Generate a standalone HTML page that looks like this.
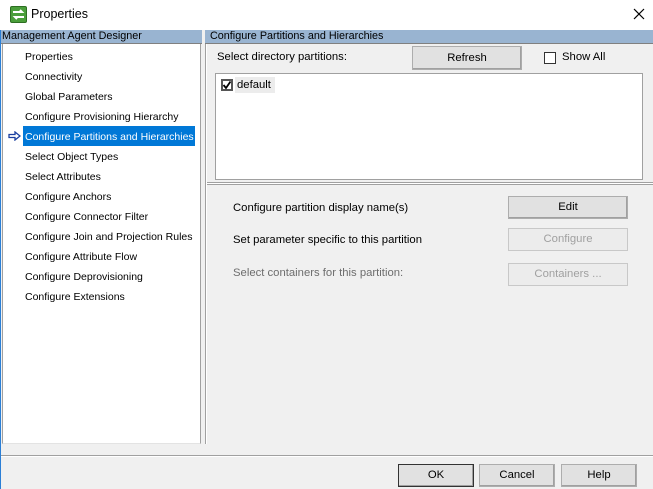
<!DOCTYPE html>
<html><head><style>
*{margin:0;padding:0;box-sizing:border-box}
body{width:653px;height:489px;background:#f0f0f0;font-family:"Liberation Sans",sans-serif;font-size:11.3px;color:#000;position:relative;overflow:hidden}
.a{position:absolute;white-space:nowrap}
.btn{position:absolute;background:#e1e1e1;border:1px solid #adadad;text-align:center;font-size:11.3px;box-shadow:inset -1px -1px 0 #a0a0a0}
.dis{color:#a0a0a0;background:#ececec;border-color:#c8c8c8;box-shadow:none}
.item{position:absolute;left:25px;height:18px;line-height:18px;font-size:10.5px;white-space:nowrap}
</style></head><body>
<div class="a" style="left:0;top:0;width:653px;height:30px;background:#fff"></div>
<div class="a" style="left:10px;top:6px;width:17px;height:17px;background:#4a9e3a;border:1px solid #2d6e22;border-radius:2px"></div>
<svg class="a" style="left:11px;top:8px" width="15" height="13" viewBox="0 0 15 13"><path d="M2 4h9l-2-2M13 9H4l2 2" stroke="#fff" stroke-width="2" fill="none"/></svg>
<div class="a" style="left:31px;top:7px;font-size:12.5px">Properties</div>
<svg class="a" style="left:633px;top:8px" width="12" height="12"><path d="M1 1L11 11M11 1L1 11" stroke="#000" stroke-width="1.2"/></svg>
<div class="a" style="left:0;top:30px;width:1px;height:459px;background:#2b7fd6"></div>
<div class="a" style="left:1px;top:30px;width:201px;height:13px;background:#99b4d1;line-height:13px;font-size:10.8px;padding-left:1px">Management Agent Designer</div>
<div class="a" style="left:1px;top:43px;width:201px;height:1px;background:#808080"></div>
<div class="a" style="left:205px;top:30px;width:448px;height:13px;background:#99b4d1;line-height:13px;font-size:10.8px;padding-left:5px">Configure Partitions and Hierarchies</div>
<div class="a" style="left:205px;top:43px;width:448px;height:1px;background:#808080"></div>
<div class="a" style="left:2px;top:44px;width:199px;height:400px;background:#fff;border-left:1px solid #a0a0a0;border-right:1px solid #a0a0a0;border-bottom:1px solid #e3e3e3"></div>
<div class="a" style="left:205px;top:44px;width:2px;height:400px;background:#a0a0a0;border-right:1px solid #fff"></div>
<div class="item" style="top:48px">Properties</div>
<div class="item" style="top:68px">Connectivity</div>
<div class="item" style="top:88px">Global Parameters</div>
<div class="item" style="top:108px">Configure Provisioning Hierarchy</div>
<div class="a" style="left:23px;top:126px;width:172px;height:20px;background:#0078d7"></div>
<div class="item" style="top:128px;color:#fff">Configure Partitions and Hierarchies</div>
<svg class="a" style="left:8px;top:131px" width="13" height="10" viewBox="0 0 13 10"><path d="M1 3.5h6V1l5 4-5 4V6.5H1z" fill="#fff" stroke="#1a3fa0" stroke-width="1.3"/></svg>
<div class="item" style="top:148px">Select Object Types</div>
<div class="item" style="top:168px">Select Attributes</div>
<div class="item" style="top:188px">Configure Anchors</div>
<div class="item" style="top:208px">Configure Connector Filter</div>
<div class="item" style="top:228px">Configure Join and Projection Rules</div>
<div class="item" style="top:248px">Configure Attribute Flow</div>
<div class="item" style="top:268px">Configure Deprovisioning</div>
<div class="item" style="top:288px">Configure Extensions</div>
<div class="a" style="left:217px;top:51px">Select directory partitions:</div>
<div class="btn" style="left:412px;top:46px;width:110px;height:24px;line-height:22px">Refresh</div>
<div class="a" style="left:544px;top:52px;width:12px;height:12px;background:#fff;border:1px solid #333"></div>
<div class="a" style="left:562px;top:51px">Show All</div>
<div class="a" style="left:215px;top:73px;width:428px;height:107px;background:#fff;border:1px solid #a0a0a0"></div>
<div class="a" style="left:235px;top:77px;width:40px;height:16px;background:#ececec"></div>
<div class="a" style="left:221px;top:79px;width:12px;height:12px;background:#fff;border:2px solid #555"></div>
<svg class="a" style="left:222px;top:80px" width="10" height="10"><path d="M1.5 5l2.5 3L8.5 1.5" stroke="#000" stroke-width="1.8" fill="none"/></svg>
<div class="a" style="left:237px;top:79px">default</div>
<div class="a" style="left:207px;top:182px;width:446px;height:3px;border-top:1px solid #a0a0a0;border-bottom:1px solid #a0a0a0;background:#fff"></div>
<div class="a" style="left:233px;top:202px">Configure partition display name(s)</div>
<div class="btn" style="left:508px;top:196px;width:120px;height:23px;line-height:21px">Edit</div>
<div class="a" style="left:233px;top:234px">Set parameter specific to this partition</div>
<div class="btn dis" style="left:508px;top:228px;width:120px;height:23px;line-height:21px">Configure</div>
<div class="a" style="left:233px;top:267px;color:#6d6d6d">Select containers for this partition:</div>
<div class="btn dis" style="left:508px;top:263px;width:120px;height:23px;line-height:21px">Containers ...</div>
<div class="a" style="left:1px;top:455px;width:652px;height:2px;border-top:1px solid #a0a0a0;border-bottom:1px solid #fff"></div>
<div class="btn" style="left:398px;top:464px;width:76px;height:23px;line-height:21px;border:1px solid #333">OK</div>
<div class="btn" style="left:479px;top:464px;width:76px;height:23px;line-height:21px">Cancel</div>
<div class="btn" style="left:561px;top:464px;width:76px;height:23px;line-height:21px">Help</div>
</body></html>
